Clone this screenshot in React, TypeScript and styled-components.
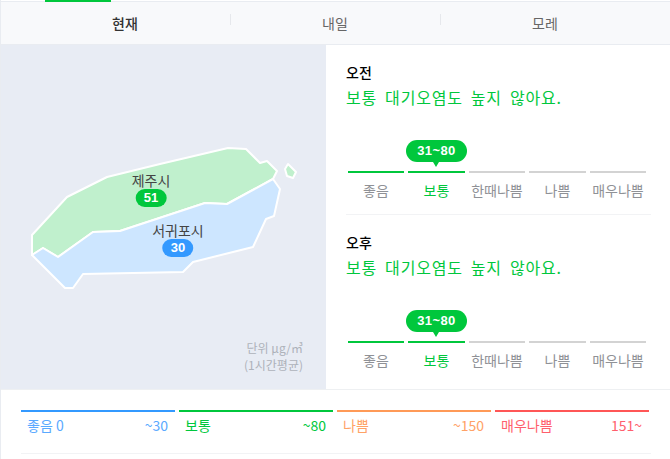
import React from "react";
import styled, { createGlobalStyle } from "styled-components";

const Global = createGlobalStyle`
  html, body { margin: 0; padding: 0; background: #fff; overflow: hidden; }
  body { font-family: "Noto Sans CJK KR", "Liberation Sans", sans-serif; }
`;
const Page = styled.div`
  width: 670px; height: 459px; display: flex; flex-direction: column; box-sizing: border-box;
  padding-top: 1px; border-left: 1px solid #e9ecf1; position: relative; overflow: hidden;
`;
const Indicator = styled.div`
  position: absolute; left: 44px; top: 0; width: 66px; height: 2px; background: #00c73c;
`;
const TabBar = styled.div`
  height: 44px; flex: none; box-sizing: border-box; display: flex; padding: 0 20px 0 19px;
  background: #f8f9fb; border-top: 1px solid #e9ecf1; border-bottom: 1px solid #e9ecf1;
`;
const Tab = styled.div<{ $active?: boolean; $divided?: boolean }>`
  flex: 1; display: flex; align-items: center; justify-content: center; position: relative;
  font-size: 14px; letter-spacing: 0; padding-bottom: 1px; color: ${p => (p.$active ? "#333" : "#666")};
  font-weight: ${p => (p.$active ? 500 : 400)};
  ${p => p.$divided ? `&::before { content: ""; position: absolute; left: 0; top: 12px; height: 11px; width: 1px; background: #e6e8ec; }` : ""}
`;
const Middle = styled.div`
  height: 345px; flex: none; display: flex; border-bottom: 1px solid #eef0f2; box-sizing: border-box;
`;
const MapPanel = styled.div`
  width: 325px; flex: none; background: #e8ecf4; position: relative;
`;
const MapSvg = styled.svg`
  position: absolute; left: -1px; top: -45px; width: 326px; height: 389px;
`;
const Pin = styled.div<{ $x: number; $y: number }>`
  position: absolute; left: ${p => p.$x}px; top: ${p => p.$y}px; transform: translateX(-50%);
  display: flex; flex-direction: column; align-items: center;
`;
const PinName = styled.span`
  font-size: 14px; line-height: 17px; color: #444; white-space: nowrap;
`;
const PinValue = styled.span<{ $bg: string }>`
  width: 31px; height: 18px; border-radius: 9px; background: ${p => p.$bg}; color: #fff;
  font: 700 13px/18px "Liberation Sans", sans-serif; text-align: center;
`;
const Unit = styled.div`
  position: absolute; right: 23px; bottom: 16px; text-align: right; font-size: 12px;
  line-height: 17px; color: #aeb2ba;
`;
const Side = styled.div`
  flex: 1; display: flex; flex-direction: column; padding: 0 19px 0 20px;
`;
const Section = styled.section`
  height: 170px; flex: none; box-sizing: border-box; padding-top: 18px; border-bottom: 1px solid #f2f3f5;
  &:last-child { border-bottom: none; }
`;
const Period = styled.div`
  font-size: 14px; line-height: 18px; font-weight: 500; color: #000;
`;
const Summary = styled.div`
  margin-top: 4px; font-size: 16px; line-height: 24px; color: #00c73c; white-space: nowrap;
  letter-spacing: 0.8px; word-spacing: 3.7px;
`;
const Scale = styled.div`
  margin: 62px 0 0 2px; display: flex; gap: 4px; width: 298px; position: relative;
`;
const Grade = styled.div<{ $bar?: boolean; $on?: boolean; $w: number }>`
  width: ${p => p.$w}px; flex: none; border-top: 2px solid ${p => (p.$bar ? "#00c73c" : "#d3d3d3")};
  padding-top: 8px; text-align: center; font-size: 14px; line-height: 18px; white-space: nowrap;
  color: ${p => (p.$on ? "#00c73c" : "#8f9196")}; display: flex; justify-content: center;
`;
const Bubble = styled.div`
  position: absolute; left: 58px; top: -31px; width: 61px; height: 22px; border-radius: 11px;
  background: #00c73c; color: #fff; font: 700 13px/22px "Liberation Sans", sans-serif; text-align: center;
  letter-spacing: 0.4px;
  &::after { content: ""; position: absolute; left: 27px; bottom: -5px; border: 3.5px solid transparent;
    border-bottom: 0; border-top: 5px solid #00c73c; }
`;
const Legend = styled.div`
  margin: 20px 20px 0; width: 630px; border-bottom: 1px solid #f2f3f5; height: 43px; display: flex; gap: 4px;
  box-sizing: content-box;
`;
const LegendItem = styled.div<{ $c: string; $t: string }>`
  width: 154px; flex: none; box-sizing: border-box; height: 43px; border-top: 2px solid ${p => p.$c};
  color: ${p => p.$t}; font-size: 14px; line-height: 18px; padding: 4px 7px 0 6px; display: flex; justify-content: space-between;
`;

const grades = [["좋음", 56], ["보통", 57], ["한때나쁨", 56], ["나쁨", 57], ["매우나쁨", 56]] as const;

const Forecast = ({ period }: { period: string }) => (
  <Section>
    <Period>{period}</Period>
    <Summary>보통 대기오염도 높지 않아요.</Summary>
    <Scale>
      <Bubble>31~80</Bubble>
      {grades.map(([g, w], i) => <Grade key={g} $w={w} $bar={i < 2} $on={i === 1}>{g}</Grade>)}
    </Scale>
  </Section>
);

export default function App() {
  return (
    <Page>
      <Global />
      <Indicator />
      <TabBar>
        <Tab $active>현재</Tab>
        <Tab $divided>내일</Tab>
        <Tab $divided>모레</Tab>
      </TabBar>
      <Middle>
        <MapPanel>
          <MapSvg viewBox="0 0 326 389">
            <g stroke="#fff" strokeWidth="2" strokeLinejoin="round">
              <polygon fill="#c0f0cd" points="32,235 67,197 107,177 160,164 228,148 246,149 260,163 267,161 277,171 273,179 227,204 205,203 120,231 93,232 58,257 43,248 32,255" />
              <polygon fill="#cde6ff" points="32,255 43,248 58,257 93,232 120,231 205,203 227,204 273,179 280,189 274,216 266,219 253,247 193,262 183,272 83,274 73,288 65,288" />
              <polygon fill="#c0f0cd" points="288,164 296,172 293,178 287,176 285,169" />
            </g>
          </MapSvg>
          <Pin $x={150} $y={127}><PinName>제주시</PinName><PinValue $bg="#00c73c">51</PinValue></Pin>
          <Pin $x={177} $y={177}><PinName>서귀포시</PinName><PinValue $bg="#3399ff">30</PinValue></Pin>
          <Unit>단위 μg/㎥<br />(1시간평균)</Unit>
        </MapPanel>
        <Side>
          <Forecast period="오전" />
          <Forecast period="오후" />
        </Side>
      </Middle>
      <Legend>
        <LegendItem $c="#3399ff" $t="#5aa9ff"><span>좋음 0</span><span>~30</span></LegendItem>
        <LegendItem $c="#00c73c" $t="#00c73c"><span>보통</span><span>~80</span></LegendItem>
        <LegendItem $c="#ff9a57" $t="#ffa266"><span>나쁨</span><span>~150</span></LegendItem>
        <LegendItem $c="#ff5656" $t="#ff5f6d"><span>매우나쁨</span><span>151~</span></LegendItem>
      </Legend>
    </Page>
  );
}
